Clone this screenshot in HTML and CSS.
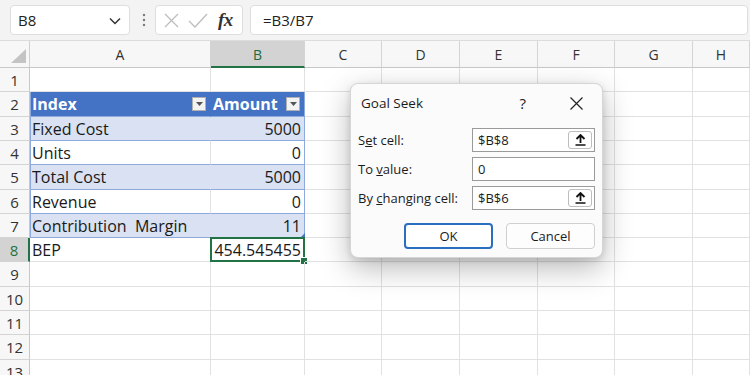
FILE: index.html
```html
<!DOCTYPE html>
<html>
<head>
<meta charset="utf-8">
<link rel="stylesheet" href="styles.css">
</head>
<body>
<div class="app">
  <div class="toolbar">
    <div class="namebox">
      <span class="nb-text">B8</span>
      <svg class="chev" width="12" height="8" viewBox="0 0 12 8"><path d="M1 1.5 L6 6.5 L11 1.5" fill="none" stroke="#333" stroke-width="1.5"/></svg>
    </div>
    <svg class="dots" width="4" height="14" viewBox="0 0 4 14"><circle cx="2" cy="2" r="1.2" fill="#777"/><circle cx="2" cy="7" r="1.2" fill="#777"/><circle cx="2" cy="12" r="1.2" fill="#777"/></svg>
    <div class="fxbox">
      <svg width="15" height="15" viewBox="0 0 15 15"><path d="M1 1 L14 14 M14 1 L1 14" stroke="#bdbdbd" stroke-width="1.3"/></svg>
      <svg width="20" height="15" viewBox="0 0 20 15"><path d="M1 8 L7 14 L19 1" fill="none" stroke="#bdbdbd" stroke-width="1.3"/></svg>
      <span class="fx">fx</span>
    </div>
    <div class="formula">=B3/B7</div>
  </div>

  <div class="sheet">
    <div class="row hdr">
      <div class="corner"><span class="tri"></span></div>
      <div class="ch">A</div><div class="ch sel">B</div><div class="ch">C</div><div class="ch">D</div><div class="ch">E</div><div class="ch">F</div><div class="ch">G</div><div class="ch">H</div>
    </div>
    <div class="row r24">
      <div class="rh">1</div><div class="c"></div><div class="c"></div><div class="c"></div><div class="c"></div><div class="c"></div><div class="c"></div><div class="c"></div><div class="c"></div>
    </div>
    <div class="row r25">
      <div class="rh">2</div>
      <div class="c th tl"><span>Index</span><span class="filt"><svg width="7" height="4" viewBox="0 0 7 4"><path d="M0 0 H7 L3.5 4 Z" fill="#555"/></svg></span></div>
      <div class="c th tr"><span>Amount</span><span class="filt"><svg width="7" height="4" viewBox="0 0 7 4"><path d="M0 0 H7 L3.5 4 Z" fill="#555"/></svg></span></div>
      <div class="c"></div><div class="c"></div><div class="c"></div><div class="c"></div><div class="c"></div><div class="c"></div>
    </div>
    <div class="row r24">
      <div class="rh">3</div><div class="c tb band tl">Fixed Cost</div><div class="c tb band tr num">5000</div>
      <div class="c"></div><div class="c"></div><div class="c"></div><div class="c"></div><div class="c"></div><div class="c"></div>
    </div>
    <div class="row r24">
      <div class="rh">4</div><div class="c tb tl">Units</div><div class="c tb tr num">0</div>
      <div class="c"></div><div class="c"></div><div class="c"></div><div class="c"></div><div class="c"></div><div class="c"></div>
    </div>
    <div class="row r25">
      <div class="rh">5</div><div class="c tb band tl">Total Cost</div><div class="c tb band tr num">5000</div>
      <div class="c"></div><div class="c"></div><div class="c"></div><div class="c"></div><div class="c"></div><div class="c"></div>
    </div>
    <div class="row r24">
      <div class="rh">6</div><div class="c tb tl">Revenue</div><div class="c tb tr num">0</div>
      <div class="c"></div><div class="c"></div><div class="c"></div><div class="c"></div><div class="c"></div><div class="c"></div>
    </div>
    <div class="row r24">
      <div class="rh">7</div><div class="c tb band tl">Contribution&nbsp; Margin</div><div class="c tb band tr num last">11</div>
      <div class="c"></div><div class="c"></div><div class="c"></div><div class="c"></div><div class="c"></div><div class="c"></div>
    </div>
    <div class="row r24">
      <div class="rh rsel">8</div><div class="c">BEP</div><div class="c num active">454.545455</div>
      <div class="c"></div><div class="c"></div><div class="c"></div><div class="c"></div><div class="c"></div><div class="c"></div>
    </div>
    <div class="row r25">
      <div class="rh">9</div><div class="c"></div><div class="c"></div><div class="c"></div><div class="c"></div><div class="c"></div><div class="c"></div><div class="c"></div><div class="c"></div>
    </div>
    <div class="row r24">
      <div class="rh">10</div><div class="c"></div><div class="c"></div><div class="c"></div><div class="c"></div><div class="c"></div><div class="c"></div><div class="c"></div><div class="c"></div>
    </div>
    <div class="row r24">
      <div class="rh">11</div><div class="c"></div><div class="c"></div><div class="c"></div><div class="c"></div><div class="c"></div><div class="c"></div><div class="c"></div><div class="c"></div>
    </div>
    <div class="row r25">
      <div class="rh">12</div><div class="c"></div><div class="c"></div><div class="c"></div><div class="c"></div><div class="c"></div><div class="c"></div><div class="c"></div><div class="c"></div>
    </div>
    <div class="row r24">
      <div class="rh">13</div><div class="c"></div><div class="c"></div><div class="c"></div><div class="c"></div><div class="c"></div><div class="c"></div><div class="c"></div><div class="c"></div>
    </div>
  </div>

  <div class="dialog">
    <div class="dtitle">
      <span class="dname">Goal Seek</span>
      <span class="help">?</span>
      <svg class="close" width="13" height="13" viewBox="0 0 13 13"><path d="M0.5 0.5 L12.5 12.5 M12.5 0.5 L0.5 12.5" stroke="#222" stroke-width="1.2"/></svg>
    </div>
    <div class="dform">
      <label>S<u>e</u>t cell:</label>
      <div class="inp"><span>$B$8</span><span class="ref"><svg width="11" height="12" viewBox="0 0 11 12"><path d="M5.5 1 L5.5 9 M1.5 5 L5.5 1 L9.5 5" fill="none" stroke="#111" stroke-width="1.8"/><path d="M0.5 11 H10.5" stroke="#111" stroke-width="1.5"/></svg></span></div>
      <label>To <u>v</u>alue:</label>
      <div class="inp"><span>0</span></div>
      <label>By <u>c</u>hanging cell:</label>
      <div class="inp"><span>$B$6</span><span class="ref"><svg width="11" height="12" viewBox="0 0 11 12"><path d="M5.5 1 L5.5 9 M1.5 5 L5.5 1 L9.5 5" fill="none" stroke="#111" stroke-width="1.8"/><path d="M0.5 11 H10.5" stroke="#111" stroke-width="1.5"/></svg></span></div>
    </div>
    <div class="dbtns">
      <button class="btn ok">OK</button>
      <button class="btn">Cancel</button>
    </div>
  </div>
</div>
</body>
</html>
```

FILE: styles.css
```css
* { box-sizing: border-box; }
html, body { margin: 0; padding: 0; }
body {
  width: 750px;
  height: 375px;
  overflow: hidden;
  background: #ffffff;
  font-family: "Open Sans", "Noto Sans", sans-serif;
  color: #222;
}
.app { position: relative; width: 750px; height: 375px; overflow: hidden; }

.toolbar {
  height: 41px;
  background: #f3f3f3;
  display: flex;
  align-items: flex-start;
  padding: 5px 2px 0 10px;
  border-bottom: 1px solid #dcdcdc;
}
.namebox {
  width: 120px;
  height: 30px;
  background: #fff;
  border: 1px solid #dedede;
  border-radius: 4px;
  display: flex;
  align-items: center;
  justify-content: space-between;
  padding: 0 8px 0 7px;
  font-size: 15px;
  color: #222;
}
.chev { margin-top: 1px; }
.dots { margin: 8px 9px 0 12px; }
.fxbox {
  width: 88px;
  height: 30px;
  background: #fff;
  border: 1px solid #dedede;
  border-radius: 4px;
  display: flex;
  align-items: center;
  gap: 9px;
  padding-left: 8px;
}
.fx {
  font-family: "Liberation Serif", serif;
  font-style: italic;
  font-weight: bold;
  font-size: 19px;
  color: #333;
  margin-left: 1px;
  letter-spacing: -0.5px;
}
.formula {
  flex: 1;
  margin-left: 7px;
  height: 30px;
  background: #fff;
  border: 1px solid #dedede;
  border-radius: 4px;
  font-size: 15px;
  line-height: 28px;
  padding-left: 12px;
  color: #222;
}

.sheet { display: flex; flex-direction: column; }
.row {
  display: grid;
  grid-template-columns: 30px 181px 94px 77px 78px 78px 77px 78px 57px;
}
.hdr { height: 27px; }
.r24 { height: 24px; }
.r25 { height: 25px; }

.corner {
  position: relative;
  background: #f7f7f7;
  border-right: 1px solid #d0d0d0;
  border-bottom: 1px solid #c8c8c8;
}
.tri {
  position: absolute;
  right: 3px;
  bottom: 4px;
  width: 0;
  height: 0;
  border-left: 15px solid transparent;
  border-bottom: 14px solid #c4c4c4;
}
.ch {
  background: #f7f7f7;
  border-right: 1px solid #d4d4d4;
  border-bottom: 1px solid #c8c8c8;
  font-size: 14px;
  color: #333;
  display: flex;
  align-items: center;
  justify-content: center;
  padding-top: 1px;
}
.ch.sel {
  background: #d3d3d3;
  color: #1f6b3f;
  border-bottom: 2px solid #217346;
}
.rh {
  background: #f7f7f7;
  border-right: 1px solid #c8c8c8;
  border-bottom: 1px solid #d4d4d4;
  font-size: 15px;
  color: #333;
  display: flex;
  align-items: center;
  justify-content: center;
}
.rh.rsel {
  background: #d3d3d3;
  color: #217346;
  border-right: 2px solid #217346;
}
.c {
  border-right: 1px solid #e1e1e1;
  border-bottom: 1px solid #e1e1e1;
  font-size: 16px;
  color: #1a1a1a;
  padding: 0 3px 0 2px;
  display: flex;
  align-items: center;
  white-space: nowrap;
  position: relative;
}
.num { justify-content: flex-end; }

.th {
  background: #4472c4;
  color: #fff;
  font-weight: bold;
  justify-content: space-between;
  border-right-color: #4472c4;
  border-bottom: 1px solid #8ea9db;
  padding-right: 4px;
}
.th.tr { border-right: 1px solid #8ea9db; }
.th.tl { box-shadow: inset 1px 0 0 #8ea9db; }
.filt {
  width: 14px;
  height: 14px;
  background: #f3f3f3;
  border: 1px solid #b0b0b0;
  display: flex;
  align-items: center;
  justify-content: center;
}
.tb {
  border-bottom: 1px solid #8ea9db;
  border-right-color: #e1e1e1;
}
.band { background: #d9e1f2; border-right-color: #d9e1f2; }
.tb.tr { border-right: 1px solid #8ea9db; }
.tb.tl { box-shadow: inset 1px 0 0 #8ea9db; }
.last::after {
  content: "";
  position: absolute;
  right: -1px;
  bottom: -1px;
  width: 0;
  height: 0;
  border-left: 5px solid transparent;
  border-bottom: 5px solid #4472c4;
}
.active::before {
  content: "";
  position: absolute;
  left: -1px;
  top: -1px;
  right: -1px;
  bottom: -1px;
  border: 2px solid #217346;
}
.active::after {
  content: "";
  position: absolute;
  right: -4px;
  bottom: -4px;
  width: 6px;
  height: 6px;
  background: #217346;
  border: 1px solid #fff;
}

.dialog {
  position: absolute;
  left: 350px;
  top: 83px;
  width: 253px;
  height: 175px;
  background: #fbfbfb;
  border: 1px solid #d6d6d6;
  border-radius: 8px;
  box-shadow: 0 10px 30px rgba(0,0,0,0.28), 0 2px 6px rgba(0,0,0,0.12);
  font-size: 13px;
  color: #1b1b1b;
  display: flex;
  flex-direction: column;
}
.dtitle {
  height: 38px;
  display: flex;
  align-items: center;
  padding: 0 0 0 10px;
}
.dname { font-size: 13.5px; flex: 1; }
.help { font-size: 15px; margin-right: 44px; }
.close { margin-right: 19px; }
.dform {
  display: grid;
  grid-template-columns: 114px 123px;
  row-gap: 5px;
  padding: 6px 0 0 7px;
  align-items: center;
}
.dform label { white-space: nowrap; }
.inp {
  height: 24px;
  background: #fff;
  border: 1px solid #9a9a9a;
  display: flex;
  align-items: center;
  justify-content: space-between;
  padding: 0 2px 0 5px;
}
.ref {
  width: 24px;
  height: 18px;
  border: 1px solid #bdbdbd;
  border-radius: 3px;
  background: #fff;
  display: flex;
  align-items: center;
  justify-content: center;
}
.dbtns {
  display: flex;
  justify-content: flex-end;
  gap: 13px;
  padding: 13px 7px 0 0;
}
.btn {
  width: 89px;
  height: 26px;
  font-family: "Open Sans", "Noto Sans", sans-serif;
  font-size: 13px;
  color: #1b1b1b;
  background: #fdfdfd;
  border: 1px solid #cfcfcf;
  border-radius: 4px;
  padding: 0;
}
.btn.ok {
  border: 2px solid #2a6ebf;
  background: #fff;
}
```
